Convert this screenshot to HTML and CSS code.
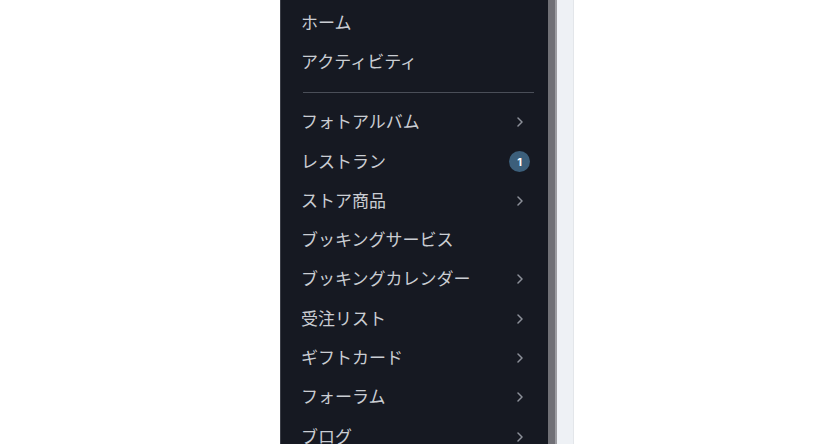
FILE: index.html
```html
<!DOCTYPE html>
<html lang="ja">
<head>
<meta charset="utf-8">
<link rel="stylesheet" href="styles.css">
</head>
<body>
<div class="layout">
  <nav class="panel">
    <div class="item"><span class="label">ホーム</span></div>
    <div class="item"><span class="label">アクティビティ</span></div>
    <div class="divider"></div>
    <div class="item"><span class="label">フォトアルバム</span><span class="trail"><svg class="chev" viewBox="0 0 6 10" width="6" height="10"><polyline points="1,1 5,5 1,9"/></svg></span></div>
    <div class="item"><span class="label">レストラン</span><span class="trail"><span class="badge">1</span></span></div>
    <div class="item"><span class="label">ストア商品</span><span class="trail"><svg class="chev" viewBox="0 0 6 10" width="6" height="10"><polyline points="1,1 5,5 1,9"/></svg></span></div>
    <div class="item"><span class="label">ブッキングサービス</span></div>
    <div class="item"><span class="label">ブッキングカレンダー</span><span class="trail"><svg class="chev" viewBox="0 0 6 10" width="6" height="10"><polyline points="1,1 5,5 1,9"/></svg></span></div>
    <div class="item"><span class="label">受注リスト</span><span class="trail"><svg class="chev" viewBox="0 0 6 10" width="6" height="10"><polyline points="1,1 5,5 1,9"/></svg></span></div>
    <div class="item"><span class="label">ギフトカード</span><span class="trail"><svg class="chev" viewBox="0 0 6 10" width="6" height="10"><polyline points="1,1 5,5 1,9"/></svg></span></div>
    <div class="item"><span class="label">フォーラム</span><span class="trail"><svg class="chev" viewBox="0 0 6 10" width="6" height="10"><polyline points="1,1 5,5 1,9"/></svg></span></div>
    <div class="item"><span class="label">ブログ</span><span class="trail"><svg class="chev" viewBox="0 0 6 10" width="6" height="10"><polyline points="1,1 5,5 1,9"/></svg></span></div>
  </nav>
  <div class="scrollbar"></div>
  <div class="side"></div>
</div>
</body>
</html>
```
FILE: styles.css
```css
html, body {
  margin: 0;
  padding: 0;
  background: #ffffff;
  height: 100%;
  overflow: hidden;
}
.layout {
  display: flex;
  height: 444px;
  margin-left: 280px;
  font-family: "Noto Sans CJK JP", "Noto Sans", sans-serif;
}
.panel {
  width: 268px;
  background: #161922;
  border-left: 1px solid #3a3d46;
  padding: 3px 18px 0 20px;
  box-sizing: border-box;
  overflow: hidden;
}
.item {
  height: 39.3px;
  display: flex;
  align-items: center;
  justify-content: space-between;
}
.label {
  font-size: 17px;
  color: #cacdd3;
  white-space: nowrap;
  line-height: 17px;
  margin-bottom: 3px;
}
.trail {
  width: 21px;
  display: flex;
  justify-content: center;
  align-items: center;
}
.chev {
  fill: none;
  stroke: #8c9099;
  stroke-width: 1.5;
  stroke-linecap: round;
  stroke-linejoin: round;
}
.badge {
  width: 21px;
  height: 21px;
  border-radius: 50%;
  background: #3c5f7b;
  color: #ffffff;
  font-family: "Inter", "Noto Sans", sans-serif;
  font-size: 11px;
  font-weight: 700;
  display: flex;
  align-items: center;
  justify-content: center;
}
.divider {
  height: 1px;
  background: #4a4e58;
  margin: 10px -4px 10px 2px;
}
.scrollbar {
  width: 7px;
  background: #707076;
  border-right: 2px solid #9c9ca1;
}
.side {
  width: 16px;
  background: #eef1f5;
  border-right: 1px solid #e3e6ea;
}
```
